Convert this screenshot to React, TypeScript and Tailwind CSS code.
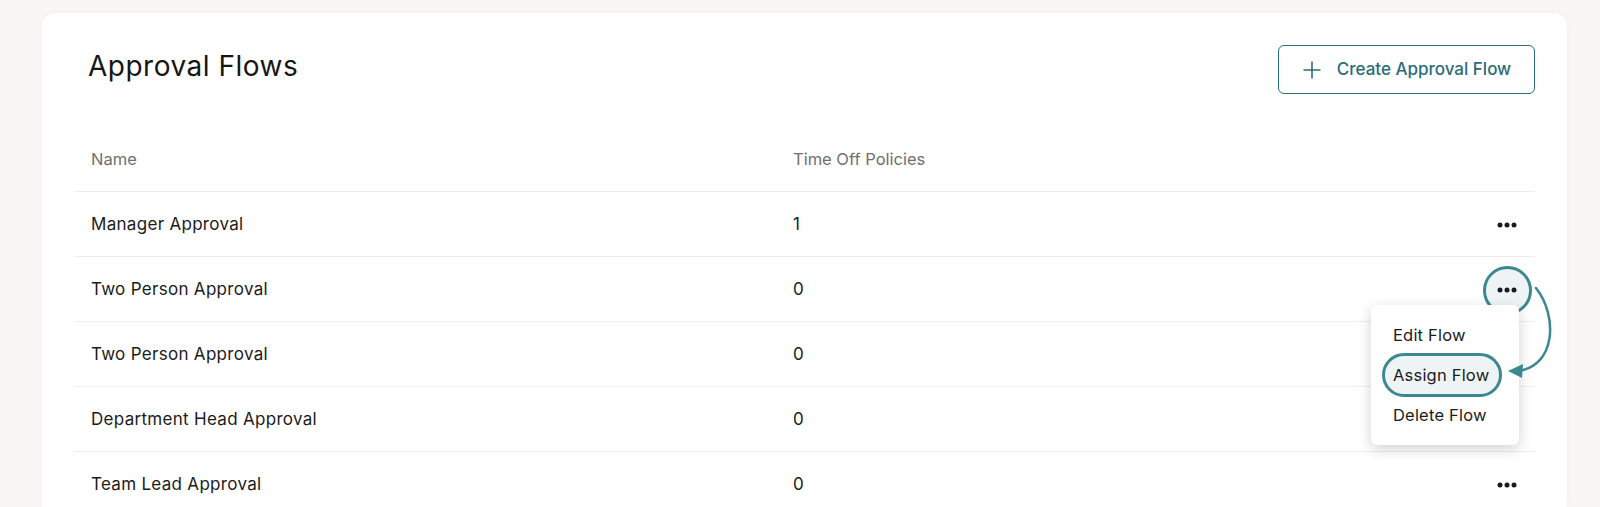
import React from "react";

type Flow = { name: string; policies: number };

const FLOWS: Flow[] = [
  { name: "Manager Approval", policies: 1 },
  { name: "Two Person Approval", policies: 0 },
  { name: "Two Person Approval", policies: 0 },
  { name: "Department Head Approval", policies: 0 },
  { name: "Team Lead Approval", policies: 0 },
];

function Dots() {
  return (
    <svg width="20" height="6" viewBox="0 0 20 6" aria-hidden="true">
      <circle cx="3" cy="3" r="2.5" fill="#1b1b1b" />
      <circle cx="10" cy="3" r="2.5" fill="#1b1b1b" />
      <circle cx="17" cy="3" r="2.5" fill="#1b1b1b" />
    </svg>
  );
}

function PlusIcon() {
  return (
    <svg width="20" height="20" viewBox="0 0 20 20" aria-hidden="true">
      <path d="M10 1.5v17M1.5 10h17" stroke="#2c6c7a" strokeWidth="1.6" fill="none" />
    </svg>
  );
}

function ActionMenu() {
  return (
    <div className="absolute right-[-2px] top-[15px] z-20 w-[148px] rounded-md bg-white py-[10px] text-[16.5px] font-normal tracking-[0.2px] text-[#1b1b1b] shadow-[0_4px_14px_rgba(0,0,0,0.18)]">
      <div className="flex h-[40px] items-center pl-[22px]">Edit Flow</div>
      <div className="flex h-[40px] items-center">
        <div className="ml-[11px] flex h-[44px] w-[120px] items-center rounded-full border-[3px] border-[#3b8891] bg-[#eef4f5] pl-[8px]">
          Assign Flow
        </div>
      </div>
      <div className="flex h-[40px] items-center pl-[22px]">Delete Flow</div>
    </div>
  );
}

function Arrow() {
  return (
    <svg
      className="pointer-events-none absolute right-[-49px] top-[-4px] z-30"
      width="60"
      height="100"
      viewBox="0 0 60 100"
      aria-hidden="true"
    >
      <path d="M30 2 C 52 30, 50 80, 12 85" stroke="#3b8891" strokeWidth="2.5" fill="none" strokeLinecap="round" />
      <path d="M2 85 L 17 78 L 16 92 Z" fill="#3b8891" />
    </svg>
  );
}

export default function App() {
  return (
    <div
      className="min-h-[507px] bg-[#f8f7f5] pl-[42px] pr-[33px] pt-[13px]"
      style={{ fontFamily: "Inter, 'Noto Sans', sans-serif" }}
    >
      <div className="h-[494px] overflow-hidden rounded-t-[14px] bg-white px-8 pt-8 shadow-[0_0_6px_rgba(0,0,0,0.04)]">
        <div className="flex items-start justify-between">
          <h1 className="pl-[14px] pt-[4px] text-[28px] font-normal leading-[34px] tracking-[0.5px] text-[#161616]">
            Approval Flows
          </h1>
          <button className="flex h-[49px] w-[257px] items-center justify-center gap-[15px] rounded-md border-[1.5px] border-[#2c6c7a] text-[17px] font-medium text-[#2c6c7a]">
            <PlusIcon />
            <span>Create Approval Flow</span>
          </button>
        </div>

        <div className="mt-[34px]">
          <div className="grid h-[64px] grid-cols-[702px_1fr_auto] items-center border-b border-[#eeeeec] px-[17px] text-[16.5px] text-[#6f6f6f]">
            <div>Name</div>
            <div>Time Off Policies</div>
            <div />
          </div>
          {FLOWS.map((flow, i) => (
            <div
              key={i}
              className="grid h-[65px] grid-cols-[702px_1fr_auto] items-center border-b border-[#eeeeec] pl-[17px] pr-[18px] pt-[2px] text-[17px] tracking-[0.3px] text-[#1b1b1b]"
            >
              <div>{flow.name}</div>
              <div>{flow.policies}</div>
              <div className="relative flex w-[20px] items-center justify-center">
                {i === 1 ? (
                  <>
                    <div className="absolute flex h-[49px] w-[49px] items-center justify-center rounded-full border-[3px] border-[#3b8891] bg-[#eef4f5]">
                      <Dots />
                    </div>
                    <ActionMenu />
                    <Arrow />
                  </>
                ) : (
                  <Dots />
                )}
              </div>
            </div>
          ))}
        </div>
      </div>
    </div>
  );
}
